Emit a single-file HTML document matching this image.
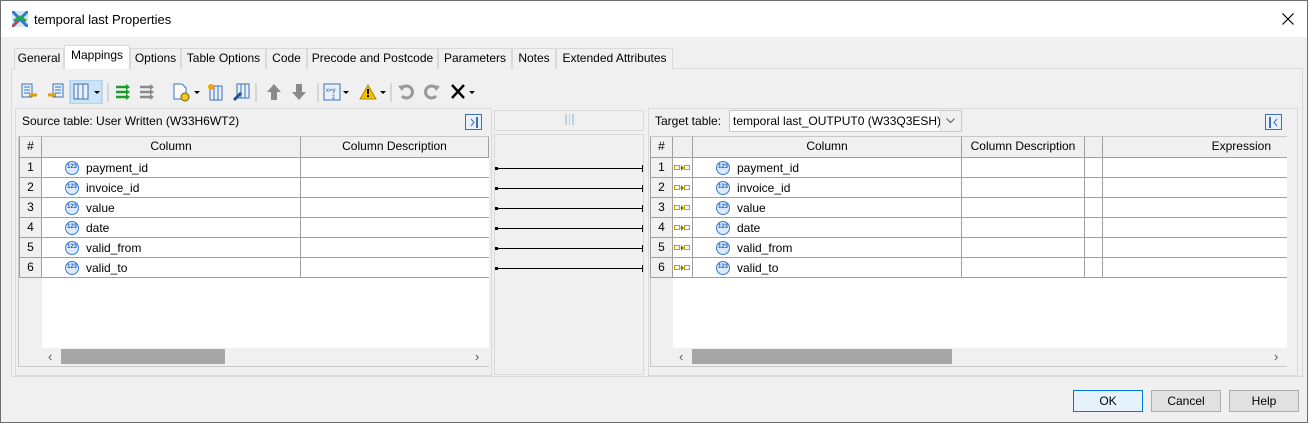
<!DOCTYPE html>
<html><head><meta charset="utf-8"><style>
*{box-sizing:border-box;margin:0;padding:0}
body{width:1310px;height:424px;background:#fff;font-family:"Liberation Sans",sans-serif;font-size:12px;color:#000;position:relative;overflow:hidden}
.a{position:absolute}
.t{position:absolute;white-space:nowrap;line-height:14px}
.tab{position:absolute;top:48px;height:21px;border:1px solid #d9d9d9;border-bottom:none;background:#f0f0f0;text-align:center;line-height:19px;font-size:12px}
.hd{position:absolute;background:#f0f0f0;border-right:1px solid #a0a0a0;border-bottom:1px solid #a0a0a0;text-align:center;line-height:19px}
.num{position:absolute;background:#f0f0f0;border:1px solid #a0a0a0;border-top:none;text-align:center;line-height:19px}
.cell{position:absolute;border-right:1px solid #a0a0a0;border-bottom:1px solid #a0a0a0;background:#fff}
.ic{position:absolute;width:14px;height:14px;border-radius:50%;border:1.5px solid #3a7bd5;background:#dbe9fb;font-size:6px;color:#1f5fbf;text-align:center;line-height:11px;font-weight:bold}
.btn{position:absolute;top:390px;width:70px;height:22px;border:1px solid #adadad;background:#e1e1e1;text-align:center;line-height:20px}
.ln{position:absolute;left:496px;width:147px;height:1px;background:#000}
.ln:before{content:"";position:absolute;left:-1px;top:-1px;width:3px;height:3px;background:#000}
.ln:after{content:"";position:absolute;right:0;top:-3px;width:1px;height:7px;background:#000}
.conn{position:absolute;left:674px;width:16px;height:6px}
</style></head><body>
<!-- window -->
<div class="a" style="left:0;top:0;width:1308px;height:423px;border:1px solid #6d6d6d;background:#f0f0f0"></div>
<div class="a" style="left:1px;top:1px;width:1306px;height:36px;background:#fff"></div>
<svg class="a" style="left:12px;top:11px" width="16" height="16"><rect x="0" y="0" width="16" height="16" fill="#d7e6f7"/><path d="M0 0L16 16M16 0L0 16" stroke="#2e7cd0" stroke-width="3"/><path d="M2 10L8 6L14 10" stroke="#27a844" stroke-width="3" fill="none"/><path d="M0 16L6 10" stroke="#e33" stroke-width="2"/></svg>
<div class="t" style="left:34px;top:13px;font-size:13px">temporal last Properties</div>
<svg class="a" style="left:1282px;top:13px" width="12" height="12"><path d="M0.5 0.5L11.5 11.5M11.5 0.5L0.5 11.5" stroke="#000" stroke-width="1.2"/></svg>

<!-- tab panel -->
<div class="a" style="left:11px;top:68px;width:1292px;height:309px;border:1px solid #d9d9d9;background:#f0f0f0"></div>
<div class="tab" style="left:14px;width:50px">General</div>
<div class="tab" style="left:64px;top:45px;height:24px;width:66px;background:#fff;border-color:#d9d9d9;z-index:2">Mappings</div>
<div class="tab" style="left:130px;width:51px">Options</div>
<div class="tab" style="left:181px;width:85px">Table Options</div>
<div class="tab" style="left:266px;width:41px">Code</div>
<div class="tab" style="left:307px;width:131px">Precode and Postcode</div>
<div class="tab" style="left:438px;width:74px">Parameters</div>
<div class="tab" style="left:512px;width:44px">Notes</div>
<div class="tab" style="left:556px;width:117px">Extended Attributes</div>

<!-- toolbar -->
<svg class="a" style="left:18px;top:80px" width="465" height="24">
<g transform="translate(4,4)"><rect x="0" y="0" width="10" height="13" fill="#e8f0fb" stroke="#3b6fb6"/><path d="M2 3h6M2 6h6M2 9h6" stroke="#3b6fb6"/><path d="M7 11h8" stroke="#e0a000" stroke-width="3"/></g>
<g transform="translate(30,4)"><rect x="5" y="0" width="10" height="13" fill="#e8f0fb" stroke="#3b6fb6"/><path d="M7 3h6M7 6h6M7 9h6" stroke="#3b6fb6"/><path d="M0 11h8" stroke="#e0a000" stroke-width="3"/></g>
<rect x="52" y="0" width="32" height="24" fill="#cce4f7" stroke="#99c2e8"/>
<g transform="translate(56,4)"><rect x="0" y="0" width="14" height="15" fill="#e8f0fb" stroke="#3b6fb6"/><path d="M4 0v15M9 0v15" stroke="#3b6fb6"/></g><path d="M76 11l3 3l3-3z" fill="#000"/>
<path d="M90 3v19M238 3v19M300 3v19M373 3v19" stroke="#bbb"/>
<g transform="translate(98,5)"><path d="M0 2h11M0 7h11M0 12h11" stroke="#1a9b2a" stroke-width="2.5"/><path d="M10 -1l4 3l-4 3zM10 4l4 3l-4 3zM10 9l4 3l-4 3z" fill="#1a9b2a"/></g>
<g transform="translate(122,5)"><path d="M0 2h11M0 7h11M0 12h11" stroke="#8a8a8a" stroke-width="2.5"/><path d="M10 -1l4 3l-4 3zM10 4l4 3l-4 3zM10 9l4 3l-4 3z" fill="#8a8a8a"/></g>
<g transform="translate(156,4)"><path d="M0 0h8l4 4v11h-12z" fill="#fff" stroke="#3b6fb6"/><circle cx="11" cy="13" r="4" fill="#f3c623" stroke="#7a6000"/></g><path d="M176 11l3 3l3-3z" fill="#000"/>
<g transform="translate(190,4)"><rect x="2" y="2" width="12" height="14" fill="#e8f0fb" stroke="#3b6fb6"/><path d="M6 2v14M10 2v14" stroke="#3b6fb6"/><circle cx="3" cy="3" r="3" fill="#f7a400"/></g>
<g transform="translate(216,4)"><rect x="3" y="0" width="12" height="14" fill="#e8f0fb" stroke="#3b6fb6"/><path d="M7 0v14M11 0v14" stroke="#3b6fb6"/><path d="M0 16l7-7" stroke="#1f4fa0" stroke-width="3"/></g>
<path d="M256 4l7 8h-4v8h-6v-8h-4z" fill="#8a8a8a"/>
<path d="M281 20l7-8h-4v-8h-6v8h-4z" fill="#8a8a8a"/>
<g transform="translate(306,4)"><rect x="0" y="0" width="16" height="16" fill="#e8f0fb" stroke="#3b6fb6"/><text x="2" y="8" font-size="6" fill="#1f4fa0" font-family="Liberation Sans">x=y</text><text x="8" y="15" font-size="6" fill="#1f4fa0" font-family="Liberation Sans">z</text></g><path d="M325 11l3 3l3-3z" fill="#000"/>
<path d="M350 5l8 14h-16z" fill="#f3c000" stroke="#b08a00"/><rect x="349" y="9" width="2" height="5" fill="#000"/><rect x="349" y="15" width="2" height="2" fill="#000"/><path d="M362 11l3 3l3-3z" fill="#000"/>
<path d="M384 16a6 6 0 1 0 0-8" stroke="#9a9a9a" stroke-width="3" fill="none"/><path d="M380 6l4 5l3-6z" fill="#9a9a9a"/>
<path d="M418 16a6 6 0 1 1 0-8" stroke="#9a9a9a" stroke-width="3" fill="none"/><path d="M422 6l-4 5l-3-6z" fill="#9a9a9a"/>
<path d="M434 5l12 13M446 5l-12 13" stroke="#000" stroke-width="2.4"/><path d="M451 11l3 3l3-3z" fill="#000"/>
</svg>

<!-- source panel -->
<div class="a" style="left:15px;top:108px;width:477px;height:268px;border:1px solid #d9d9d9;background:#f0f0f0"></div>
<div class="t" style="left:22px;top:114px">Source table: User Written (W33H6WT2)</div>
<div class="a" style="left:465px;top:114px;width:17px;height:16px;border:1px solid #3b6fb6;background:#e8f0fb"></div>
<svg class="a" style="left:468px;top:117px" width="12" height="11"><path d="M3 2l3 3.5l-3 3.5" stroke="#3b6fb6" fill="none"/><path d="M9 0v11" stroke="#3b6fb6" stroke-width="2"/></svg>
<div class="a" style="left:18px;top:136px;width:471px;height:231px;border:1px solid #c8c8c8;background:#f0f0f0"></div>
<div class="a" style="left:42px;top:157px;width:447px;height:191px;background:#fff"></div>
<div class="hd" style="left:19px;top:137px;width:23px;height:21px;border-left:1px solid #a0a0a0">#</div>
<div class="hd" style="left:42px;top:137px;width:259px;height:21px">Column</div>
<div class="hd" style="left:301px;top:137px;width:188px;height:21px">Column Description</div>

<!-- middle -->
<div class="a" style="left:494px;top:110px;width:150px;height:21px;border:1px solid #d9d9d9;background:#f0f0f0"></div>
<div class="a" style="left:565px;top:114px;width:9px;height:11px;border-left:2px solid #bcd0e6;border-right:2px solid #bcd0e6"></div>
<div class="a" style="left:569px;top:114px;width:1px;height:11px;background:#bcd0e6"></div>
<div class="a" style="left:494px;top:134px;width:150px;height:241px;border:1px solid #d9d9d9;background:#f0f0f0"></div>

<!-- target panel -->
<div class="a" style="left:648px;top:108px;width:650px;height:268px;border:1px solid #d9d9d9;background:#f0f0f0"></div>
<div class="t" style="left:655px;top:114px">Target table:</div>
<div class="a" style="left:729px;top:110px;width:233px;height:22px;border:1px solid #c8c8c8;background:#fff"></div>
<div class="t" style="left:733px;top:114px">temporal last_OUTPUT0 (W33Q3ESH)</div>
<div class="a" style="left:940px;top:111px;width:21px;height:20px;background:#f0f0f0;border-left:1px solid #ddd"></div>
<svg class="a" style="left:946px;top:118px" width="9" height="6"><path d="M0.5 0.5l4 4l4-4" stroke="#555" fill="none"/></svg>
<div class="a" style="left:1265px;top:114px;width:17px;height:16px;border:1px solid #3b6fb6;background:#e8f0fb"></div>
<svg class="a" style="left:1268px;top:117px" width="12" height="11"><path d="M9 2l-3 3.5l3 3.5" stroke="#3b6fb6" fill="none"/><path d="M2 0v11" stroke="#3b6fb6" stroke-width="2"/></svg>
<div class="a" style="left:650px;top:136px;width:637px;height:231px;border:1px solid #c8c8c8;background:#f0f0f0"></div>
<div class="a" style="left:673px;top:157px;width:614px;height:191px;background:#fff"></div>
<div class="hd" style="left:650px;top:137px;width:23px;height:21px;border-left:1px solid #a0a0a0">#</div>
<div class="hd" style="left:673px;top:137px;width:20px;height:21px"></div>
<div class="hd" style="left:693px;top:137px;width:269px;height:21px">Column</div>
<div class="hd" style="left:962px;top:137px;width:123px;height:21px">Column Description</div>
<div class="hd" style="left:1085px;top:137px;width:18px;height:21px"></div>
<div class="hd" style="left:1103px;top:137px;width:184px;height:21px;border-right:none;text-align:right;padding-right:16px">Expression</div>

<!-- scrollbars -->
<div class="a" style="left:42px;top:348px;width:447px;height:18px;background:#f0f0f0"></div>
<div class="t" style="left:48px;top:350px;font-size:13px;color:#555">‹</div>
<div class="a" style="left:61px;top:349px;width:164px;height:15px;background:#a6a6a6"></div>
<div class="t" style="left:475px;top:350px;font-size:13px;color:#555">›</div>
<div class="a" style="left:673px;top:348px;width:614px;height:18px;background:#f0f0f0"></div>
<div class="t" style="left:679px;top:350px;font-size:13px;color:#555">‹</div>
<div class="a" style="left:692px;top:349px;width:260px;height:15px;background:#a6a6a6"></div>
<div class="t" style="left:1274px;top:350px;font-size:13px;color:#555">›</div>

<div id="rows"></div>
<script>
var names=["payment_id","invoice_id","value","date","valid_from","valid_to"],h="";
for(var i=0;i<6;i++){var y=158+20*i;
h+='<div class="num" style="left:19px;top:'+y+'px;width:23px;height:20px">'+(i+1)+'</div>';
h+='<div class="cell" style="left:42px;top:'+y+'px;width:259px;height:20px"></div>';
h+='<div class="cell" style="left:301px;top:'+y+'px;width:188px;height:20px;border-right:none"></div>';
h+='<div class="ic" style="left:65px;top:'+(y+3)+'px">123</div><div class="t" style="left:86px;top:'+(y+3)+'px">'+names[i]+'</div>';
h+='<div class="ln" style="top:'+(y+10)+'px"></div>';
h+='<div class="num" style="left:650px;top:'+y+'px;width:23px;height:20px">'+(i+1)+'</div>';
h+='<div class="cell" style="left:673px;top:'+y+'px;width:20px;height:20px"></div>';
h+='<svg class="conn" style="top:'+(y+7)+'px" width="16" height="6"><rect x="0.5" y="0.5" width="5" height="4" fill="#fff" stroke="#c9a000"/><rect x="10.5" y="0.5" width="5" height="4" fill="#fff" stroke="#c9a000"/><path d="M6 3h4" stroke="#c9a000"/><path d="M7 0l3 3l-3 3z" fill="#5a8a00"/></svg>';
h+='<div class="cell" style="left:693px;top:'+y+'px;width:269px;height:20px"></div>';
h+='<div class="cell" style="left:962px;top:'+y+'px;width:123px;height:20px"></div>';
h+='<div class="cell" style="left:1085px;top:'+y+'px;width:18px;height:20px"></div>';
h+='<div class="cell" style="left:1103px;top:'+y+'px;width:184px;height:20px;border-right:none"></div>';
h+='<div class="ic" style="left:716px;top:'+(y+3)+'px">123</div><div class="t" style="left:737px;top:'+(y+3)+'px">'+names[i]+'</div>';}
document.getElementById("rows").innerHTML=h;
</script>

<!-- buttons -->
<div class="btn" style="left:1073px;border:1px solid #0078d7;background:#e5f1fb">OK</div>
<div class="btn" style="left:1151px">Cancel</div>
<div class="btn" style="left:1229px">Help</div>
</body></html>
